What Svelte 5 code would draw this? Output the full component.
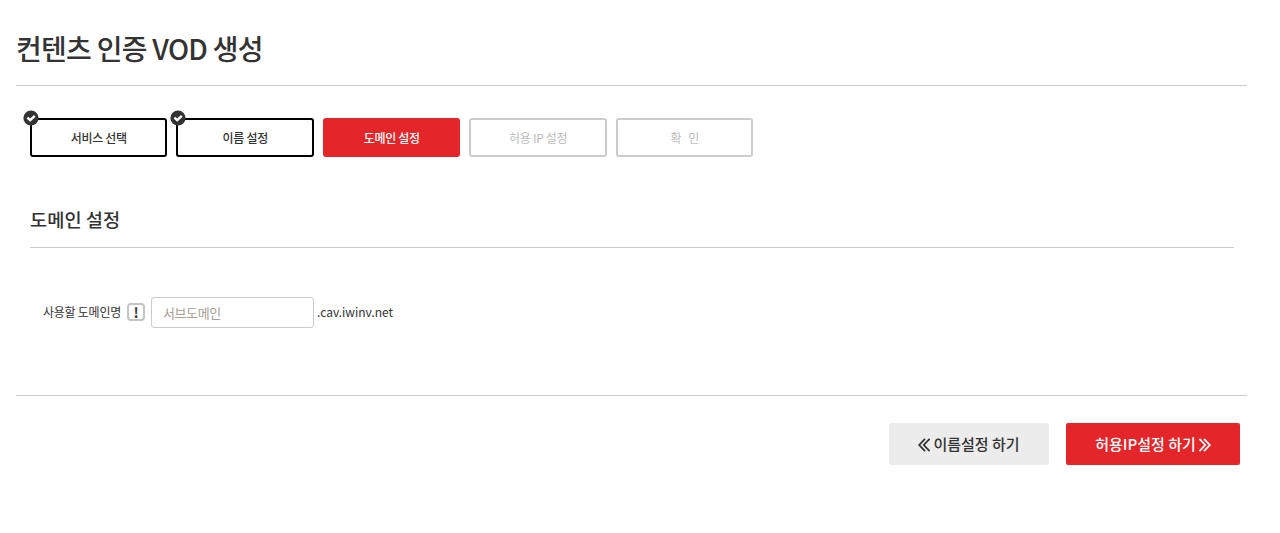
<script>
	const steps = [
		{ name: '서비스 선택', state: 'done' },
		{ name: '이름 설정', state: 'done' },
		{ name: '도메인 설정', state: 'active' },
		{ name: '허용 IP 설정', state: 'todo' },
		{ name: '확   인', state: 'todo' }
	]
</script>

<div class="page">
	<h1>컨텐츠 인증 VOD 생성</h1>
	<hr class="top" />

	<ul class="steps">
		{#each steps as step}
			<li class={step.state}>
				{#if step.state === 'done'}
					<svg class="check" width="16" height="16" viewBox="0 0 16 16">
						<circle cx="8" cy="8" r="7.6" fill="#333" />
						<path d="M4.4 7.6 L7.2 10.2 L11.8 5.8" fill="none" stroke="#fff" stroke-width="2.4" />
					</svg>
				{/if}
				<span>{step.name}</span>
			</li>
		{/each}
	</ul>

	<section>
		<h2>도메인 설정</h2>
		<div class="field">
			<label for="sub">사용할 도메인명</label>
			<span class="hint">!</span>
			<input id="sub" type="text" placeholder="서브도메인" />
			<span class="suffix">.cav.iwinv.net</span>
		</div>
	</section>

	<div class="buttons">
		<button class="prev">
			<svg width="12" height="14" viewBox="0 0 12 14">
				<path d="M7 .8 L1.2 7 L7 13.2 M11.6 .8 L5.8 7 L11.6 13.2" fill="none" stroke="currentColor" stroke-width="1.8" />
			</svg>
			<span>이름설정 하기</span>
		</button>
		<button class="next">
			<span>허용IP설정 하기</span>
			<svg width="12" height="14" viewBox="0 0 12 14">
				<path d="M.4 .8 L6.2 7 L.4 13.2 M5 .8 L10.8 7 L5 13.2" fill="none" stroke="currentColor" stroke-width="1.8" />
			</svg>
		</button>
	</div>
</div>

<style>
	:global(body) {
		background: #fff;
	}

	.page {
		padding: 0 33px 0 16px;
		font-family: "Noto Sans CJK KR", "Noto Sans", sans-serif;
		color: #333;
	}

	h1 {
		margin: 0;
		padding-top: 26px;
		height: 59px;
		box-sizing: border-box;
		font-size: 28px;
		line-height: 44px;
		font-weight: 500;
		letter-spacing: -0.73px;
	}

	hr {
		margin: 0;
		border: none;
		border-top: 1px solid #ccc;
	}

	.top {
		margin-top: 26px;
	}

	.steps {
		display: flex;
		gap: 9px;
		list-style: none;
		margin: 32px 0 0 13.98px;
		padding: 0;
	}

	.steps li {
		position: relative;
		display: flex;
		align-items: center;
		justify-content: center;
		box-sizing: border-box;
		width: 137.5px;
		height: 39px;
		border: 2px solid #000;
		border-radius: 3px;
		font-size: 12px;
		font-weight: 500;
		letter-spacing: -0.3px;
		white-space: pre;
	}

	.steps li.active {
		background: #e4252a;
		border-color: #e4252a;
		color: #fff;
	}

	.steps li.todo {
		border-color: #ccc;
		color: #bbb;
		font-weight: 400;
	}

	.check {
		position: absolute;
		left: -8.5px;
		top: -10.5px;
	}

	section {
		padding: 0 13px 0 14px;
	}

	h2 {
		margin: 47px 0 0;
		padding-bottom: 13px;
		border-bottom: 1px solid #ccc;
		font-size: 18.7px;
		line-height: 30px;
		font-weight: 500;
	}

	.field {
		display: flex;
		align-items: center;
		height: 32px;
		margin-top: 48px;
		padding-left: 13px;
		font-size: 12px;
		letter-spacing: -0.25px;
	}

	label {
		margin-bottom: 2px;
	}

	.hint {
		display: flex;
		align-items: center;
		justify-content: center;
		box-sizing: border-box;
		width: 18px;
		height: 18px;
		margin-left: 6px;
		border: 2px solid #c4c4c4;
		border-radius: 4px;
		font-size: 14px;
		font-weight: 700;
	}

	input {
		box-sizing: border-box;
		width: 163px;
		height: 31px;
		margin-left: 6px;
		padding: 0 11px;
		border: 1px solid #ccc;
		border-radius: 3px;
		font-family: inherit;
		font-size: 13px;
		letter-spacing: -0.4px;
	}

	input::placeholder {
		color: #a89f94;
	}

	.suffix {
		margin: 0 0 2px 3px;
		font-size: 12px;
		letter-spacing: 0;
	}

	.buttons {
		display: flex;
		justify-content: flex-end;
		gap: 17px;
		padding: 27px 7px 0 0;
		border-top: 1px solid #ccc;
		margin-top: 67px;
	}

	button {
		display: flex;
		align-items: center;
		justify-content: center;
		gap: 3px;
		height: 42px;
		padding: 0 0 2px;
		border: none;
		border-radius: 2px;
		font-family: inherit;
		font-size: 15px;
		font-weight: 500;
	}

	button svg {
		margin-top: 4px;
	}

	.prev {
		width: 160px;
		background: #ececec;
		color: #333;
	}

	.next {
		width: 174px;
		background: #e4252a;
		color: #fff;
	}
</style>
